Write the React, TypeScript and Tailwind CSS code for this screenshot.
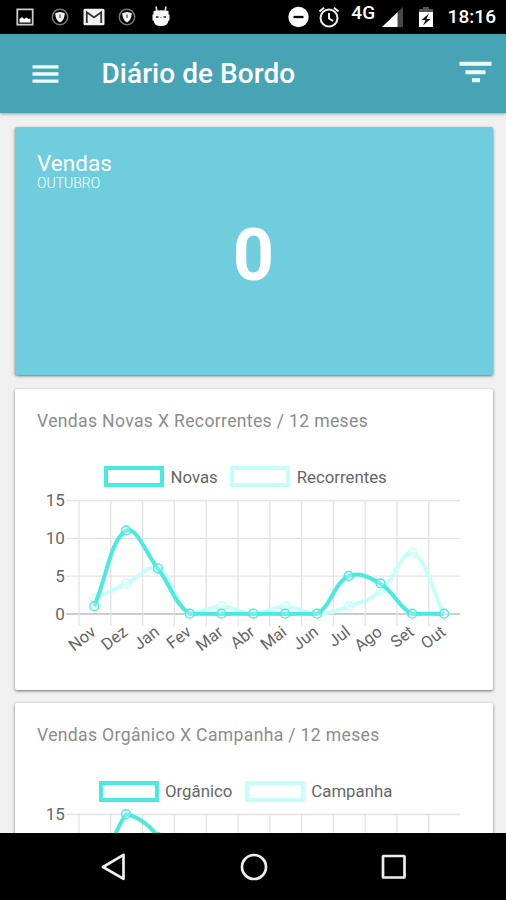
import React from 'react';

const MONTHS = ['Nov', 'Dez', 'Jan', 'Fev', 'Mar', 'Abr', 'Mai', 'Jun', 'Jul', 'Ago', 'Set', 'Out'];

const STRONG = '#4aeade';
const SOFT = '#c6fffa';

// Plot geometry, in the coordinates of the chart's own drawing.
const LEFT = 42;
const STEP = 31.8;
const TOP = 10.5;
const BOTTOM = 124;

type Pt = { x: number; y: number };

function toPoints(values: number[]): Pt[] {
  return values.map((v, i) => ({
    x: LEFT + 15.3 + i * STEP,
    y: BOTTOM - (v / 15) * (BOTTOM - TOP),
  }));
}

const clampY = (y: number) => Math.max(TOP, Math.min(BOTTOM - 0.5, y));

// Smooth line through the points, with control points kept inside the plot.
function curve(values: number[]): string {
  const pts = toPoints(values);
  const ctrl = pts.map((p, i) => {
    const prev = pts[i - 1] ?? p;
    const next = pts[i + 1] ?? p;
    const d01 = Math.hypot(p.x - prev.x, p.y - prev.y);
    const d12 = Math.hypot(next.x - p.x, next.y - p.y);
    const fa = (0.4 * d01) / (d01 + d12);
    const fb = (0.4 * d12) / (d01 + d12);
    return {
      inX: p.x - fa * (next.x - prev.x),
      inY: clampY(p.y - fa * (next.y - prev.y)),
      outX: p.x + fb * (next.x - prev.x),
      outY: clampY(p.y + fb * (next.y - prev.y)),
    };
  });
  return pts
    .map((p, i) =>
      i === 0
        ? `M${p.x} ${p.y}`
        : `C${ctrl[i - 1].outX} ${ctrl[i - 1].outY} ${ctrl[i].inX} ${ctrl[i].inY} ${p.x} ${p.y}`,
    )
    .join(' ');
}

function Series({ values, color }: { values: number[]; color: string }) {
  return (
    <g fill="none" stroke={color}>
      <path d={curve(values)} strokeWidth="4" strokeLinejoin="round" />
      {toPoints(values).map((p, i) => (
        <circle key={i} cx={p.x} cy={p.y - 0.3} r="4.4" strokeWidth="1.4" fill="#ffffff" fillOpacity="0.25" />
      ))}
    </g>
  );
}

function Plot({ a, b }: { a: number[]; b: number[] }) {
  return (
    <svg className="block h-[180px] w-[435px]" viewBox="0 0 435 180" fontFamily="Roboto, sans-serif">
      {[15, 10, 5, 0].map((v, i) => {
        const y = TOP + (i * (BOTTOM - TOP)) / 3;
        return (
          <g key={v}>
            <path d={`M29 ${y}H423`} stroke={v === 0 ? '#bdbdbd' : '#e3e3e3'} strokeWidth="1.3" />
            <text x="28" y={y + 5.5} textAnchor="end" fontSize="17" letterSpacing="0.1" fill="#666666">
              {v}
            </text>
          </g>
        );
      })}
      {MONTHS.map((m, i) => {
        const x = LEFT + i * STEP;
        return (
          <g key={m}>
            <path d={`M${x} ${TOP}V136`} stroke="#e3e3e3" strokeWidth="1.3" />
            <text
              transform={`translate(${x + 18} 144) rotate(-37.5)`}
              textAnchor="end"
              fontSize="16.5"
              fill="#666666"
            >
              {m}
            </text>
          </g>
        );
      })}
      <Series values={b} color={SOFT} />
      <Series values={a} color={STRONG} />
    </svg>
  );
}

type ChartCardProps = {
  title: string;
  first: string;
  second: string;
  a: number[];
  b: number[];
  legend: string;
};

function ChartCard({ title, first, second, a, b, legend }: ChartCardProps) {
  return (
    <section className="h-[301px] shrink-0 rounded-xs bg-white pl-[22.5px] shadow-[0_1px_3px_rgba(0,0,0,0.55)]">
      <h2 className="pt-5 text-[17.6px] leading-6 tracking-[0.33px] text-[#8c8c8c]">{title}</h2>
      <div className={`flex h-5 items-center text-[16.8px] text-[#666666] ${legend}`}>
        <span className="h-[21px] w-[60px] shrink-0 border-4 border-[#4aeade]" />
        <span className="ml-[6.5px] leading-5">{first}</span>
        <span className="ml-[12.5px] h-[21px] w-[60px] shrink-0 border-4 border-[#c6fffa]" />
        <span className="ml-[6.5px] leading-5">{second}</span>
      </div>
      <div className="pt-[3px]">
        <Plot a={a} b={b} />
      </div>
    </section>
  );
}

function Badge() {
  return (
    <svg className="h-[18px] w-[18px]" viewBox="0 0 18 18">
      <circle cx="9" cy="9" r="7.7" fill="none" stroke="#777777" strokeWidth="1.5" />
      <path d="M4.3 5 9 4l4.700 1c0 5-1.600 7.600-4.700 9.500C5.900 12.600 4.300 10 4.300 5Z" fill="#f0f0f0" />
      <path d="M8.200 6.400h1.600v3.500H8.200z" fill="#777777" />
    </svg>
  );
}

function StatusBar() {
  return (
    <div className="flex h-[34px] shrink-0 items-center bg-black pr-[10px] pl-[16px] text-white">
      <svg className="h-[18px] w-[18px]" viewBox="0 0 18 18">
        <path d="M1.300 1.300h15.400v15.400H1.300z" fill="none" stroke="#cccccc" strokeWidth="1.800" />
        <path d="M3.500 14.500v-3.500l2.500-2 2 2 2.500-1.500 2 1.500 2-.5v4Z" fill="#ffffff" />
      </svg>
      <div className="ml-[17px]"><Badge /></div>
      <svg className="ml-[14px] h-[18px] w-[22px]" viewBox="0 0 22 18">
        <rect x="0.500" y="0.800" width="21" height="16.400" rx="1.500" fill="#f2f2f2" />
        <path d="M3.800 15V4.200l7.200 5.300 7.200-5.300V15" fill="none" stroke="#333333" strokeWidth="1.800" />
      </svg>
      <div className="ml-[13px]"><Badge /></div>
      <svg className="ml-[15px] h-[22px] w-[20px] -translate-y-[1px]" viewBox="0 0 20 22">
        <path d="M6 7 5 1.500M14 7l1-5.500" stroke="#dddddd" strokeWidth="1.600" />
        <path d="M2.500 6Q10 4.500 17.500 6v3.500h1v6H17.500Q17 21 10 21T2.500 15.500h-1v-6h1Z" fill="#f7f7f7" />
        <path d="M5 12h2.500M12.500 12H15" stroke="#222222" strokeWidth="1.500" />
        <path d="M9 12.500h2" stroke="#aaaaaa" />
      </svg>
      <div className="flex-1" />
      <svg className="h-[22px] w-[22px]" viewBox="0 0 22 22">
        <circle cx="10.500" cy="11" r="10.200" fill="#ffffff" />
        <path d="M5.500 11h10" stroke="#000000" strokeWidth="2.300" />
      </svg>
      <svg className="ml-[8px] h-[22px] w-[22px]" viewBox="0 0 22 22" fill="none" stroke="#eeeeee" strokeWidth="2">
        <circle cx="11" cy="12" r="8.500" />
        <path d="M11 7v5.500l4 2.500M1.500 5.500 6 1.800M20.500 5.500 16 1.800" />
      </svg>
      <span className="ml-[11px] -translate-y-[4px] text-[19px] leading-5 font-medium tracking-[0.300px]">4G</span>
      <svg className="ml-[6px] h-[22px] w-[22px]" viewBox="0 0 22 22">
        <path d="M21 1v20H0Z" fill="#484848" />
        <path d="M15.500 6.200V21H0Z" fill="#ffffff" />
      </svg>
      <svg className="ml-[14px] h-[22px] w-[16px]" viewBox="0 0 16 22">
        <path d="M1 3h4V1h6v2h4v3H1Z" fill="#555555" />
        <path d="M1 6h14v15H1Z" fill="#ffffff" />
        <path d="m11 7.500-7.500 6.500h4L5 19.500l7.500-6.500h-4Z" fill="#111111" />
      </svg>
      <span className="ml-[14px] text-[19px] leading-6 font-medium tracking-[0.050px]">18:16</span>
    </div>
  );
}

export default function App() {
  return (
    <div className="flex h-[900px] w-[506px] flex-col overflow-hidden bg-[#f0f0f0] font-[Roboto,sans-serif]">
      <StatusBar />
      <header className="z-10 flex h-[79px] shrink-0 items-center bg-[#46a4b5] pr-[14px] pl-[32px] text-white shadow-[0_1px_3px_rgba(0,0,0,0.35)]">
        <svg className="h-[20px] w-[27px]" viewBox="0 0 27 20">
          <path d="M0.500 2.800h26M0.500 10h26M0.500 17.200h26" stroke="#ebfcff" strokeWidth="3.300" />
        </svg>
        <h1 className="ml-[42.500px] flex-1 text-[28px] leading-8 font-medium tracking-[0.050px]">Diário de Bordo</h1>
        <svg className="h-[22px] w-[33px] -translate-y-[2px]" viewBox="0 0 33 22">
          <path d="M0.500 2.800h32M6.500 11.200h20M13 19.300h8" stroke="#ebfcff" strokeWidth="3.900" />
        </svg>
      </header>
      <main className="flex min-h-0 flex-1 flex-col gap-[13.500px] overflow-hidden pr-[13.500px] pl-[14.500px] pt-[14px]">
        <section className="flex h-[248px] shrink-0 flex-col rounded-xs bg-[#70cdde] px-[22.500px] pt-6 text-white shadow-[0_1px_3px_rgba(0,0,0,0.55)]">
          <h2 className="text-[22.500px] leading-6">Vendas</h2>
          <p className="text-[14px] leading-4 font-light">OUTUBRO</p>
          <p className="pt-[27px] text-center text-[72px] leading-[76px] font-bold">0</p>
        </section>
        <ChartCard
          title="Vendas Novas X Recorrentes / 12 meses"
          first="Novas"
          second="Recorrentes"
          a={[1, 11, 6, 0, 0, 0, 0, 0, 5, 4, 0, 0]}
          b={[2, 4, 6, 0, 1, 0, 1, 0, 1, 3, 8, 0]}
          legend="mt-[34px] pl-[67px]"
        />
        <ChartCard
          title="Vendas Orgânico X Campanha / 12 meses"
          first="Orgânico"
          second="Campanha"
          a={[1, 15, 12, 0, 1, 0, 1, 0, 6, 7, 8, 0]}
          b={[0, 0, 0, 0, 0, 0, 0, 0, 0, 0, 0, 0]}
          legend="mt-[34px] pl-[61.500px]"
        />
      </main>
      <nav className="z-10 flex h-[67px] shrink-0 items-center bg-black pl-[100px]">
        <svg className="h-[28px] w-[26px]" viewBox="0 0 26 28">
          <path d="M23.500 1.800v24L3 14Z" fill="none" stroke="#eeeeee" strokeWidth="2.700" strokeLinejoin="round" />
        </svg>
        <svg className="ml-[113.500px] h-[28px] w-[28px]" viewBox="0 0 28 28">
          <circle cx="14" cy="14" r="12" fill="none" stroke="#eeeeee" strokeWidth="2.700" />
        </svg>
        <svg className="ml-[113.500px] h-[26px] w-[26px]" viewBox="0 0 26 26">
          <rect x="2" y="2" width="21.500" height="21.500" rx="0.500" fill="none" stroke="#eeeeee" strokeWidth="2.700" />
        </svg>
      </nav>
    </div>
  );
}
